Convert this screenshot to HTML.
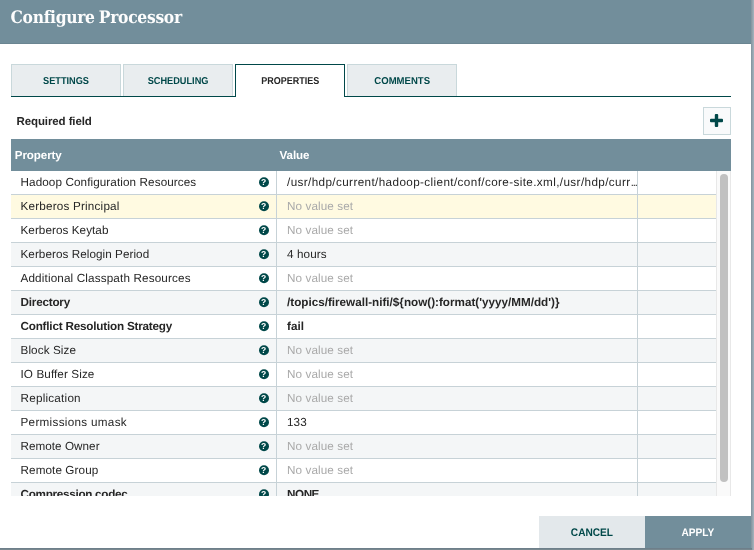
<!DOCTYPE html>
<html>
<head>
<meta charset="utf-8">
<title>Configure Processor</title>
<style>
*{box-sizing:border-box;margin:0;padding:0}
html,body{width:754px;height:550px;overflow:hidden}
body{background:#a0afb9;font-family:"Liberation Sans",sans-serif;font-size:12px;color:#262626;position:relative;text-rendering:geometricPrecision}
#backdrop{position:absolute;left:0;top:0;width:754px;height:550px;background:linear-gradient(to right,#8798a2 0,#8798a2 751px,#8798a2 751.5px,#a0afb9 753.5px)}
#bstrip{position:absolute;left:0;top:548px;width:752px;height:2px;background:linear-gradient(to bottom,#6e7f8a 0,#6e7f8a 1px,#78888f 1px,#78888f 2px)}
#dialog{position:absolute;left:0;top:0;width:751px;height:548px;background:#fff;will-change:transform}
#hdr{position:absolute;left:0;top:0;width:751px;height:44px;background:#728e9b;border-bottom:1px solid #6a8591}
#title{position:absolute;left:10.5px;top:6px;font-family:"DejaVu Serif Condensed","DejaVu Serif","Liberation Serif",serif;font-weight:bold;font-size:17.3px;color:#fdfdfd;line-height:24px;letter-spacing:-.3px;word-spacing:-1px;white-space:nowrap}
.tab{position:absolute;top:64px;height:32px;width:110px;background:#e9edef;border:1px solid #c9d8db;border-bottom:none;color:#004849;font-size:10px;font-weight:bold;text-align:center;line-height:34px}
.tab span{display:inline-block;transform:scaleX(.92)}
.btn span{display:inline-block;transform:scaleX(.92)}
.tab.sel{background:#fff;border:1px solid #004849;border-bottom:none;height:33px;color:#262626}
#tabline{position:absolute;left:11px;top:96px;width:720px;height:1px;background:#004849}
#req{position:absolute;left:16.5px;top:114px;font-weight:bold;font-size:11.5px;line-height:16px;letter-spacing:-.1px;white-space:nowrap}
#add{position:absolute;left:703px;top:107px;width:28px;height:28px;background:#f9fafb;border:1px solid #c9d8db}
#add svg{position:absolute;left:-1px;top:-1px}
#thead{position:absolute;left:11px;top:139px;width:720px;height:32px;background:#728e9b;color:#fff;font-weight:bold;font-size:11.6px;line-height:16px;letter-spacing:-.1px}
#thead span{position:absolute;top:9px}
#grid{position:absolute;left:11px;top:171px;width:720px;height:325px;overflow:hidden;background:#fff}
.row{position:absolute;left:0;width:705px;height:24px;border-bottom:1px solid #c7d2d7;background:#fff;font-size:11.7px;letter-spacing:.1px;line-height:23px;white-space:nowrap}
.row.alt{background:#f4f6f7}
.row.hl{background:#fffae1}
.row.req{font-weight:bold;letter-spacing:-.2px}
.c1{position:absolute;left:0;top:0;width:266px;height:23px;padding-left:9.5px;transform:translateY(.3px)}
.c2{position:absolute;left:266px;top:0;width:360px;height:23px;padding-left:10px;overflow:hidden;transform:translateY(.3px)}
.vl{position:absolute;top:0;width:1px;height:325px;background:#c7d2d7}
.nv{color:#aaa}
.q{position:absolute;left:247.5px;top:5.5px;width:10px;height:10px;border-radius:50%;background:#004849;color:#fff;font-size:8.5px;font-weight:bold;font-style:normal;letter-spacing:0;line-height:10.5px;text-align:center}
#sbar{position:absolute;left:716px;top:171px;width:15px;height:325px;background:#fafafa;border-left:1px solid #e8e8e8;border-right:1px solid #e8e8e8}
#thumb{position:absolute;left:720px;top:174px;width:8px;height:308px;border-radius:4px;background:#c1c1c1}
.btn{position:absolute;top:516px;height:32px;width:106px;text-align:center;line-height:34px;font-size:11px;font-weight:bold}
#cancel{left:539px;background:#e3e8eb;color:#004849}
#apply{left:645px;background:#728e9b;color:#fff}
</style>
</head>
<body>
<div id="backdrop"></div>
<div id="bstrip"></div>
<div id="dialog">
<div id="hdr"><div id="title">Configure Processor</div></div>
<div class="tab" style="left:11px"><span>SETTINGS</span></div>
<div class="tab" style="left:123px"><span>SCHEDULING</span></div>
<div class="tab" style="left:347px"><span style="transform:scaleX(.955)">COMMENTS</span></div>
<div id="tabline"></div>
<div class="tab sel" style="left:235px"><span style="transform:scaleX(.9)">PROPERTIES</span></div>
<div id="req">Required field</div>
<div id="add"><svg width="28" height="28" viewBox="0 0 28 28"><path d="M8 11.8h3.8V8a1 1 0 0 1 1-1h1.4a1 1 0 0 1 1 1v3.8H19a1 1 0 0 1 1 1v1.4a1 1 0 0 1-1 1h-3.8V19a1 1 0 0 1-1 1h-1.4a1 1 0 0 1-1-1v-3.8H8a1 1 0 0 1-1-1v-1.4a1 1 0 0 1 1-1z" fill="#004849"/></svg></div>
<div id="thead"><span style="left:3.8px">Property</span><span style="left:268.6px">Value</span></div>
<div id="grid">
<div class="row" style="top:0"><div class="c1">Hadoop Configuration Resources<i class="q">?</i></div><div class="c2" style="letter-spacing:.39px">/usr/hdp/current/hadoop-client/conf/core-site.xml,/usr/hdp/curr<span style="letter-spacing:-1px;margin-left:.2px;font-size:11px">...</span></div></div>
<div class="row hl" style="top:24px"><div class="c1" style="letter-spacing:.2px">Kerberos Principal<i class="q">?</i></div><div class="c2 nv">No value set</div></div>
<div class="row" style="top:48px"><div class="c1" style="letter-spacing:.06px">Kerberos Keytab<i class="q">?</i></div><div class="c2 nv">No value set</div></div>
<div class="row alt" style="top:72px"><div class="c1" style="letter-spacing:.06px">Kerberos Relogin Period<i class="q">?</i></div><div class="c2">4 hours</div></div>
<div class="row" style="top:96px"><div class="c1" style="letter-spacing:.15px">Additional Classpath Resources<i class="q">?</i></div><div class="c2 nv">No value set</div></div>
<div class="row alt req" style="top:120px"><div class="c1">Directory<i class="q">?</i></div><div class="c2" style="letter-spacing:0">/topics/firewall-nifi/${now():format('yyyy/MM/dd')}</div></div>
<div class="row req" style="top:144px"><div class="c1">Conflict Resolution Strategy<i class="q">?</i></div><div class="c2" style="letter-spacing:0">fail</div></div>
<div class="row alt" style="top:168px"><div class="c1">Block Size<i class="q">?</i></div><div class="c2 nv">No value set</div></div>
<div class="row" style="top:192px"><div class="c1">IO Buffer Size<i class="q">?</i></div><div class="c2 nv">No value set</div></div>
<div class="row alt" style="top:216px"><div class="c1" style="letter-spacing:.23px">Replication<i class="q">?</i></div><div class="c2 nv">No value set</div></div>
<div class="row" style="top:240px"><div class="c1" style="letter-spacing:.3px">Permissions umask<i class="q">?</i></div><div class="c2">133</div></div>
<div class="row alt" style="top:264px"><div class="c1" style="letter-spacing:.04px">Remote Owner<i class="q">?</i></div><div class="c2 nv">No value set</div></div>
<div class="row" style="top:288px"><div class="c1">Remote Group<i class="q">?</i></div><div class="c2 nv">No value set</div></div>
<div class="row alt req" style="top:312px"><div class="c1" style="letter-spacing:-.28px">Compression codec<i class="q">?</i></div><div class="c2" style="letter-spacing:-.45px">NONE</div></div>
<div class="vl" style="left:265px"></div><div class="vl" style="left:626px"></div>
</div>
<div id="sbar"></div><div id="thumb"></div>
<div class="btn" id="cancel"><span>CANCEL</span></div>
<div class="btn" id="apply"><span>APPLY</span></div>
</div>
</body>
</html>
